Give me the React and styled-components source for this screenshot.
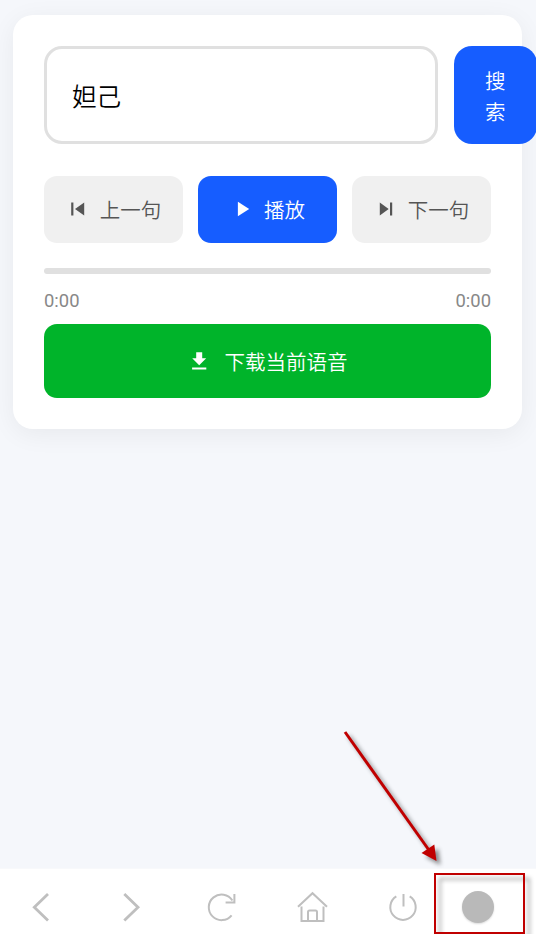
import styled, { createGlobalStyle } from "styled-components";

export default function App() {
  return (
    <Page>
      <GlobalStyle />
      <Main>
        <Card>
          <SearchRow>
            <SearchInput type="text" defaultValue="妲己" />
            <SearchButton>搜索</SearchButton>
          </SearchRow>
          <Controls>
            <ControlButton>
              <Icon viewBox="0 0 20 20">
                <path d="M3.2 3.4h2.2v13.2H3.2zM16.2 3.4v13.2L7 10z" />
              </Icon>
              上一句
            </ControlButton>
            <ControlButton $primary>
              <Icon viewBox="0 0 20 20">
                <path d="M5.9 2.8v14.4L17.2 10z" />
              </Icon>
              播放
            </ControlButton>
            <ControlButton>
              <Icon viewBox="0 0 20 20">
                <path d="M3.8 3.6v12.8l8.9-6.4zM14 3.4h2.2v13.2H14z" />
              </Icon>
              下一句
            </ControlButton>
          </Controls>
          <Progress />
          <Times>
            <span>0:00</span>
            <span>0:00</span>
          </Times>
          <DownloadButton>
            <Icon viewBox="0 0 20 20">
              <path d="M6.2 1.2h6v6h4L9.2 14.2l-7-7h4zM2.1 16.4h14.2v2.2H2.1z" />
            </Icon>
            下载当前语音
          </DownloadButton>
        </Card>
      </Main>
      <NavBar>
        <NavIcon viewBox="0 0 32 32" $stroke={2.8}>
          <path d="M23 3L9.3 16.2 23 29.4" />
        </NavIcon>
        <NavIcon viewBox="0 0 32 32" $stroke={2.8}>
          <path d="M8.3 3L22 16.2 8.3 29.4" />
        </NavIcon>
        <NavIcon viewBox="0 0 32 32" $stroke={2}>
          <path d="M25.6 24.3A12.8 12.8 0 1 1 26.4 9.5" />
          <path d="M28.4 3v8.4h-8.8" />
        </NavIcon>
        <NavIcon viewBox="0 0 32 32" $stroke={2}>
          <path d="M1 15.8L15.5 2.2 30 15.8M4.5 15.5V30h22V15.5" />
          <path d="M11 30V21a1.5 1.5 0 0 1 1.5-1.5h6a1.5 1.5 0 0 1 1.5 1.5v9" />
        </NavIcon>
        <NavIcon viewBox="0 0 32 32" $stroke={2}>
          <path d="M9.3 5.4A12.7 12.7 0 1 0 22.7 5.4M16.5 3v12.5" />
        </NavIcon>
        <NavDot />
      </NavBar>
      <Highlight />
      <Arrow viewBox="0 0 110 145">
        <path d="M5 7l86 121" stroke="#c00000" strokeWidth="3" />
        <path d="M96.5 136l-15-8 12.8-8.6z" fill="#c00000" />
      </Arrow>
    </Page>
  );
}

const GlobalStyle = createGlobalStyle`
  * {
    box-sizing: border-box;
  }

  body {
    margin: 0;
    overflow: hidden;
    background: #f5f7fb;
    font-family: Roboto, "Noto Sans CJK SC", sans-serif;
  }

  button,
  input {
    font-family: inherit;
    font-weight: 350;
  }
`;

const Page = styled.div`
  position: relative;
  display: flex;
  flex-direction: column;
  height: 934px;
  overflow: hidden;
`;

const Main = styled.main`
  flex: 1;
  padding: 15px 14px 0 13px;
`;

const Card = styled.section`
  padding: 31px;
  border-radius: 20px;
  background: #fff;
  box-shadow: 0 5px 26px rgba(0, 0, 0, 0.06);
`;

const SearchRow = styled.div`
  display: flex;
  gap: 16px;
  height: 98px;
  margin-bottom: 31.5px;
`;

const SearchInput = styled.input`
  flex: 0 0 394px;
  min-width: 0;
  padding: 0 25px;
  border: 3px solid #e0e0e0;
  border-radius: 18px;
  outline: none;
  background: #fff;
  color: #000;
  font-size: 24.6px;
`;

const SearchButton = styled.button`
  flex: 0 0 82.5px;
  padding: 5px 30px 0;
  border: none;
  border-radius: 18px;
  background: #165dff;
  color: #fff;
  font-size: 20.5px;
  line-height: 30.7px;
`;

const Controls = styled.div`
  display: grid;
  grid-template-columns: repeat(3, 1fr);
  gap: 15px;
  margin-bottom: 25px;
`;

const ControlButton = styled.button`
  display: flex;
  align-items: center;
  justify-content: center;
  gap: 12px;
  height: 67.5px;
  padding: 0 0 0 2px;
  border: none;
  border-radius: 13px;
  background: ${({ $primary }) => ($primary ? "#165dff" : "#f0f0f0")};
  color: ${({ $primary }) => ($primary ? "#fff" : "#555")};
  font-size: 20.5px;
`;

const Icon = styled.svg`
  width: 20px;
  height: 20px;
  fill: currentColor;
`;

const Progress = styled.div`
  height: 6px;
  border-radius: 3px;
  background: #e0e0e0;
`;

const Times = styled.div`
  display: flex;
  justify-content: space-between;
  padding: 15px 0 11px;
  color: #888;
  font-size: 18.4px;
  line-height: 24px;
`;

const DownloadButton = styled(ControlButton)`
  width: 100%;
  height: 74px;
  gap: 15px;
  background: #00b42a;
  color: #fff;
`;

const NavBar = styled.nav`
  display: flex;
  align-items: center;
  gap: 58.5px;
  height: 66px;
  padding: 11px 0 0 25px;
  border-top: 1px solid #f8f9fb;
  background: #fff;
`;

const NavIcon = styled.svg`
  flex: none;
  width: 32px;
  height: 32px;
  fill: none;
  stroke: #bfbfbf;
  stroke-width: ${({ $stroke }) => $stroke};
`;

const NavDot = styled.span`
  width: 32px;
  height: 32px;
  margin-left: -16px;
  border-radius: 50%;
  background: #b9b9b9;
  box-shadow: 0 1px 2px rgba(0, 0, 0, 0.15);
`;

/* annotations laid over the screen */
const Highlight = styled.div`
  position: absolute;
  left: 434px;
  top: 873px;
  width: 91px;
  height: 61px;
  border: 2px solid #c00000;
  filter: drop-shadow(5px 5px 2px rgba(0, 0, 0, 0.35));
`;

const Arrow = styled.svg`
  position: absolute;
  left: 340px;
  top: 725px;
  width: 110px;
  height: 145px;
  overflow: visible;
  filter: drop-shadow(4px 4px 2px rgba(0, 0, 0, 0.45));
`;
